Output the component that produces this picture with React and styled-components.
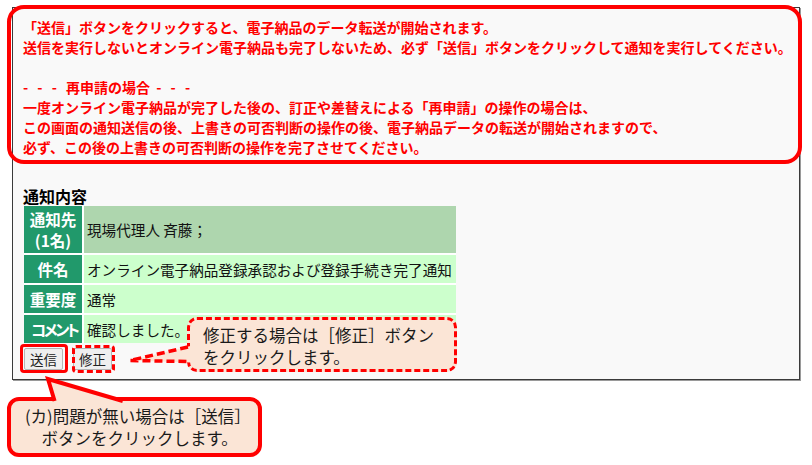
import React from "react";
import styled, { createGlobalStyle } from "styled-components";

const RED = "#ff0000";
const PEACH = "#fbe5d6";
const JP = `"Noto Sans CJK JP", "Noto Sans", sans-serif`;

const Global = createGlobalStyle`
  html, body { margin: 0; padding: 0; background: #ffffff; }
  body { font-family: ${JP}; color: #000; }
  * { box-sizing: border-box; }
`;

const Stage = styled.div`
  position: relative;
  width: 812px;
  height: 465px;
  padding: 7px 12px 0 12px;
  overflow: hidden;
`;

const Panel = styled.section`
  width: 788px;
  height: 373px;
  border: 1px solid #3a3a3a;
  box-shadow: 1px 1px 0 #9a9a9a;
  background: #f9f9f9;
  padding: 9px 0 0 10px;
  display: flex;
  flex-direction: column;
  align-items: flex-start;
`;

const Notice = styled.div`
  color: ${RED};
  font-weight: 700;
  font-size: 14px;
  line-height: 20px;
  white-space: nowrap;
`;

const NoticeLine = styled.div`
  min-height: 20px;
`;

const Dashes = styled.span`
  letter-spacing: 3px;
`;

const Heading = styled.h2`
  margin: 29px 0 0 0;
  font-size: 16px;
  font-weight: 700;
  line-height: 20px;
  color: #000;
`;

const InfoGrid = styled.div`
  margin-left: 1px;
  display: grid;
  grid-template-columns: 58px 372px;
  grid-template-rows: 47px 28px 28px 28px;
  gap: 2px;
  background: #ffffff;
`;

const Label = styled.div`
  background: #21996b;
  color: #ffffff;
  font-weight: 700;
  font-size: 15.5px;
  line-height: 21px;
  display: flex;
  align-items: center;
  justify-content: center;
  text-align: center;
  white-space: nowrap;
`;

const LabelText = styled.span`
  letter-spacing: ${(p) => (p.$condensed ? "-2.5px" : "0")};
  font-feature-settings: ${(p) => (p.$condensed ? '"palt"' : "normal")};
  margin-right: ${(p) => (p.$condensed ? "-2.5px" : "0")};
`;

const Value = styled.div`
  background: ${(p) => (p.$active ? "#aed6ae" : "#ccffcc")};
  color: #111;
  font-size: 14.6px;
  padding-left: 3px;
  display: flex;
  align-items: center;
  white-space: nowrap;
`;

const Actions = styled.div`
  margin: 5px 0 0 1px;
  display: flex;
  gap: 10px;
`;

const Btn = styled.button`
  height: 22px;
  padding: 0 5px;
  font-family: ${JP};
  font-size: 13.5px;
  line-height: 20px;
  background: #efefef;
  color: #222;
  border: 1px solid #b5b5b5;
  border-radius: 2px;
`;

const Mark = styled.div`
  position: absolute;
  pointer-events: none;
  border-color: ${RED};
`;

const NoticeFrame = styled(Mark)`
  left: 7px;
  top: 5px;
  width: 795px;
  height: 159px;
  border-width: 4px;
  border-style: solid;
  border-radius: 17px;
`;

const SendMark = styled(Mark)`
  left: 20px;
  top: 344px;
  width: 48px;
  height: 29px;
  border-width: 3px;
  border-style: solid;
  border-radius: 4px;
`;

const FixMark = styled(Mark)`
  left: 72px;
  top: 345px;
  width: 43px;
  height: 28px;
  border-width: 3px;
  border-style: dashed;
  border-radius: 4px;
`;

const Callout = styled.div`
  position: absolute;
  background: ${PEACH};
  border: ${(p) => (p.$dashed ? "3px dashed" : "4px solid")} ${RED};
  color: #1a1a1a;
  font-size: 16.5px;
  line-height: 22px;
  white-space: nowrap;
`;

const FixCallout = styled(Callout)`
  left: 187px;
  top: 317px;
  width: 270px;
  height: 55px;
  padding: 4px 0 0 13px;
  border-radius: 10px;
`;

const SendCallout = styled(Callout)`
  left: 7px;
  top: 397px;
  width: 255px;
  height: 60px;
  padding: 4px 0 0 14px;
  border-radius: 12px;
`;

const Tail = styled.svg`
  position: absolute;
  overflow: visible;
  pointer-events: none;
`;

const FixTail = styled(Tail)`
  left: 126px;
  top: 342px;
`;

const SendTail = styled(Tail)`
  left: 44px;
  top: 375px;
`;

const notice = [
  "「送信」ボタンをクリックすると、電子納品のデータ転送が開始されます。",
  "送信を実行しないとオンライン電子納品も完了しないため、必ず「送信」ボタンをクリックして通知を実行してください。",
  "",
  null,
  "一度オンライン電子納品が完了した後の、訂正や差替えによる「再申請」の操作の場合は、",
  "この画面の通知送信の後、上書きの可否判断の操作の後、電子納品データの転送が開始されますので、",
  "必ず、この後の上書きの可否判断の操作を完了させてください。",
];

export default function App() {
  return (
    <>
      <Global />
      <Stage>
        <Panel>
          <Notice>
            {notice.map((line, i) =>
              line === null ? (
                <NoticeLine key={i}>
                  <Dashes>- - - </Dashes>再申請の場合<Dashes> - - -</Dashes>
                </NoticeLine>
              ) : (
                <NoticeLine key={i}>{line}</NoticeLine>
              )
            )}
          </Notice>
          <Heading>通知内容</Heading>
          <InfoGrid>
            <Label>
              <LabelText>
                通知先
                <br />
                (1名)
              </LabelText>
            </Label>
            <Value $active>現場代理人 斉藤；</Value>
            <Label>
              <LabelText>件名</LabelText>
            </Label>
            <Value>オンライン電子納品登録承認および登録手続き完了通知</Value>
            <Label>
              <LabelText>重要度</LabelText>
            </Label>
            <Value>通常</Value>
            <Label>
              <LabelText $condensed>コメント</LabelText>
            </Label>
            <Value>確認しました。</Value>
          </InfoGrid>
          <Actions>
            <Btn type="button">送信</Btn>
            <Btn type="button">修正</Btn>
          </Actions>
        </Panel>

        <NoticeFrame />
        <SendMark />
        <FixMark />

        <FixCallout $dashed>
          <div>修正する場合は［修正］ボタン</div>
          <div>をクリックします。</div>
        </FixCallout>
        <FixTail width="68" height="24" viewBox="0 0 68 24">
          <polygon points="64.5,4 4,18.5 64.5,20.5" fill={PEACH} />
          <polyline
            points="62,5 4,18.5 62,19.5"
            fill="none"
            stroke={RED}
            strokeWidth="3.5"
            strokeDasharray="8 4"
          />
        </FixTail>

        <SendCallout>
          <div>(カ)問題が無い場合は［送信］</div>
          <div>　ボタンをクリックします。</div>
        </SendCallout>
        <SendTail width="84" height="28" viewBox="0 0 84 28">
          <polygon points="10.6,26.5 4,4 78.8,26.5" fill={PEACH} />
          <polyline
            points="10.6,26 4,4 78.8,26"
            fill="none"
            stroke={RED}
            strokeWidth="4"
            strokeLinejoin="miter"
          />
        </SendTail>
      </Stage>
    </>
  );
}
